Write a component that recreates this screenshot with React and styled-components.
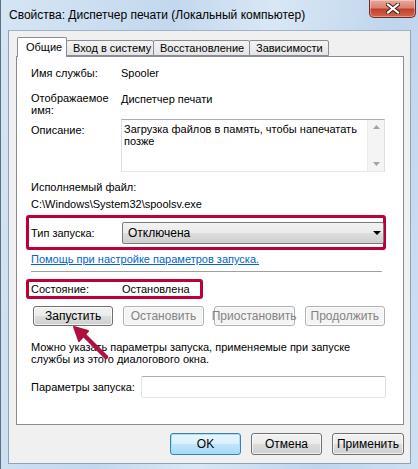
import React from 'react';
import styled, { createGlobalStyle } from 'styled-components';

const GlobalStyle = createGlobalStyle`
  html, body {
    margin: 0;
    padding: 0;
    background: #c9dcef;
  }
  body {
    font-family: "Liberation Sans", Arial, sans-serif;
    font-size: 11px;
    color: #000;
  }
`;

const Window = styled.div`
  position: relative;
  width: 418px;
  height: 469px;
  display: flex;
  flex-direction: column;
  box-sizing: border-box;
  border-left: 1px solid #5b6f85;
  background: linear-gradient(100deg, #d6e5f4 0%, #c3d8ee 35%, #d9e7f5 55%, #bfd5ec 80%, #cfe0f2 100%);
  overflow: hidden;
`;

const TitleBar = styled.div`
  height: 30px;
  flex: none;
  display: flex;
  justify-content: space-between;
  align-items: flex-start;
  padding-left: 8px;
`;

const Title = styled.div`
  padding-top: 8px;
  font-size: 12px;
  line-height: 14px;
  color: #000;
`;

const CloseButton = styled.div`
  width: 47px;
  height: 18px;
  margin-right: 2px;
  box-sizing: border-box;
  border: 1px solid #6d2a21;
  border-top: none;
  border-radius: 0 0 5px 5px;
  background: linear-gradient(#e9a99b 0%, #d9826f 45%, #c3402b 55%, #d2654f 100%);
  box-shadow: inset 0 0 0 1px rgba(255, 255, 255, 0.35);
  display: flex;
  align-items: center;
  justify-content: center;
`;

const Client = styled.div`
  flex: 1;
  margin: 0 7px 5px 7px;
  padding: 5px 6px 8px 7px;
  background: #f0f0f0;
  border: 1px solid #8ea3b8;
  border-top-color: #9fb2c6;
  display: flex;
  flex-direction: column;
  box-sizing: border-box;
`;

const TabRow = styled.div`
  display: flex;
  align-items: flex-end;
  padding-left: 1px;
  height: 20px;
  position: relative;
  z-index: 1;
`;

const Tab = styled.div`
  width: ${p => p.w}px;
  height: ${p => (p.active ? 20 : 16)}px;
  box-sizing: border-box;
  border: 1px solid #898c95;
  border-bottom: ${p => (p.active ? 'none' : '1px solid #898c95')};
  margin-left: ${p => (p.first ? 0 : -1)}px;
  background: ${p => (p.active ? '#fff' : 'linear-gradient(#f3f3f3, #e5e5e5)')};
  padding-left: ${p => (p.active ? 8 : 6)}px;
  line-height: ${p => (p.active ? 18 : 15)}px;
  white-space: nowrap;
  border-radius: 2px 2px 0 0;
  margin-bottom: ${p => (p.active ? -1 : 0)}px;
`;

const Panel = styled.div`
  flex: 1;
  background: #fff;
  border: 1px solid #898c95;
  padding: 0 18px 0 14px;
  display: flex;
  flex-direction: column;
`;

const FieldRow = styled.div`
  display: grid;
  grid-template-columns: 90px 1fr;
  align-items: start;
  margin-top: ${p => p.mt || 0}px;
  line-height: 12px;
`;

const Label = styled.div`
  padding-top: ${p => p.pt || 0}px;
`;

const Value = styled.div`
  padding-top: ${p => p.pt || 0}px;
`;

const Line = styled.div`
  line-height: 12px;
  margin-top: ${p => p.mt || 0}px;
  white-space: nowrap;
`;

const DescBox = styled.div`
  height: 53px;
  box-sizing: border-box;
  border: 1px solid #abadb3;
  border-left-color: #dcdfe6;
  border-right-color: #dcdfe6;
  border-bottom-color: #e3e9ef;
  display: flex;
`;

const DescText = styled.div`
  flex: 1;
  padding: 3px 2px 0 2px;
  line-height: 12px;
`;

const ScrollTrack = styled.div`
  width: 16px;
  background: #f4f4f4;
  border-left: 1px solid #ececec;
  display: flex;
  flex-direction: column;
  justify-content: space-between;
  align-items: center;
  padding: 5px 0 5px;
`;

const Highlight = styled.div`
  border: 3px solid #bd0037;
  border-radius: 3px;
  margin: ${p => p.mt || 0}px ${p => p.mr ?? -1}px 0 -5px;
  width: ${p => (p.w ? `${p.w}px` : 'auto')};
  box-sizing: border-box;
  padding: ${p => p.pad};
  display: grid;
  grid-template-columns: 91px 1fr;
  align-items: center;
  line-height: 12px;
`;

const Combo = styled.div`
  height: 22px;
  box-sizing: border-box;
  border: 1px solid #7a7a7a;
  border-radius: 2px;
  background: linear-gradient(#f2f2f2 0%, #ebebeb 50%, #dddddd 51%, #cfcfcf 100%);
  display: flex;
  align-items: center;
  justify-content: space-between;
  padding: 0 2px 0 5px;
  margin-right: -3px;
  font-size: 12px;
`;

const Link = styled.div`
  color: #0066cc;
  text-decoration: underline;
  line-height: 12px;
  margin-top: 3px;
`;

const Separator = styled.div`
  height: 1px;
  background: #a0a0a0;
  margin: 6px 3px 0 0;
`;

const ButtonRow = styled.div`
  display: flex;
  gap: ${p => p.gap}px;
  justify-content: ${p => p.justify || 'flex-start'};
  margin-top: ${p => p.mt || 0}px;
  padding-left: ${p => p.pl || 0}px;
`;

const Button = styled.div`
  width: ${p => p.w}px;
  height: ${p => p.h}px;
  box-sizing: border-box;
  border: 1px solid ${p => (p.disabled ? '#adb2b5' : p.primary ? '#3c7fb1' : '#707070')};
  border-radius: 3px;
  background: ${p =>
    p.disabled
      ? '#f4f4f4'
      : p.primary
      ? 'linear-gradient(#eaf6fd 0%, #d9f0fc 50%, #bee6fd 51%, #a7d9f5 100%)'
      : 'linear-gradient(#f2f2f2 0%, #ebebeb 50%, #dddddd 51%, #cfcfcf 100%)'};
  box-shadow: ${p => (p.primary ? 'inset 0 0 0 1px #a7e0f7' : 'inset 0 0 0 1px rgba(255,255,255,0.7)')};
  color: ${p => (p.disabled ? '#838383' : '#000')};
  display: flex;
  align-items: center;
  justify-content: center;
  font-size: 12px;
  white-space: nowrap;
`;

const Paragraph = styled.div`
  margin-top: 15px;
  line-height: 12px;
`;

const InputRow = styled.div`
  display: flex;
  align-items: center;
  justify-content: space-between;
  margin-top: 11px;
  margin-right: -1px;
`;

const TextInput = styled.div`
  width: 245px;
  height: 22px;
  box-sizing: border-box;
  border: 1px solid #abadb3;
  border-left-color: #e2e3ea;
  border-right-color: #dbdfe6;
  border-bottom-color: #e3e9ef;
  border-radius: 2px;
  background: #fff;
`;

const ArrowMark = styled.svg`
  position: absolute;
  left: 66px;
  top: 322px;
  pointer-events: none;
`;

const tabs = [
  { label: 'Общие', w: 50, active: true },
  { label: 'Вход в систему', w: 88 },
  { label: 'Восстановление', w: 97 },
  { label: 'Зависимости', w: 80 },
];

export default function App() {
  return (
    <>
      <GlobalStyle />
      <Window>
        <TitleBar>
          <Title>Свойства: Диспетчер печати (Локальный компьютер)</Title>
          <CloseButton>
            <svg width="14" height="11" viewBox="0 0 14 11">
              <path d="M2 1.5 L12 9.5 M12 1.5 L2 9.5" stroke="#3a1a16" strokeWidth="4" strokeLinecap="square" />
              <path d="M2 1.5 L12 9.5 M12 1.5 L2 9.5" stroke="#fff" strokeWidth="2.2" strokeLinecap="square" />
            </svg>
          </CloseButton>
        </TitleBar>
        <Client>
          <TabRow>
            {tabs.map((t, i) => (
              <Tab key={t.label} w={t.w} active={t.active} first={i === 0}>
                {t.label}
              </Tab>
            ))}
          </TabRow>
          <Panel>
            <FieldRow mt={10}>
              <Label>Имя службы:</Label>
              <Value>Spooler</Value>
            </FieldRow>
            <FieldRow mt={13}>
              <Label>
                Отображаемое
                <br />
                имя:
              </Label>
              <Value pt={1}>Диспетчер печати</Value>
            </FieldRow>
            <FieldRow mt={3}>
              <Label pt={5}>Описание:</Label>
              <DescBox>
                <DescText>Загрузка файлов в память, чтобы напечатать позже</DescText>
                <ScrollTrack>
                  <svg width="7" height="4" viewBox="0 0 7 4">
                    <path d="M0 4 L3.5 0 L7 4 Z" fill="#a3a3a3" />
                  </svg>
                  <svg width="7" height="4" viewBox="0 0 7 4">
                    <path d="M0 0 L3.5 4 L7 0 Z" fill="#a3a3a3" />
                  </svg>
                </ScrollTrack>
              </DescBox>
            </FieldRow>
            <Line mt={9}>Исполняемый файл:</Line>
            <Line mt={5}>C:\Windows\System32\spoolsv.exe</Line>
            <Highlight mt={5} pad="4px 2px 3px 2px">
              <span>Тип запуска:</span>
              <Combo>
                <span>Отключена</span>
                <svg width="8" height="4" viewBox="0 0 8 4">
                  <path d="M0 0 L8 0 L4 4 Z" fill="#000" />
                </svg>
              </Combo>
            </Highlight>
            <Link>Помощь при настройке параметров запуска.</Link>
            <Separator />
            <Highlight mt={7} w={177} mr={0} pad="1px 2px 1px 2px">
              <span>Состояние:</span>
              <span>Остановлена</span>
            </Highlight>
            <ButtonRow mt={7} gap={10} pl={2}>
              <Button w={81} h={20}>Запустить</Button>
              <Button w={81} h={20} disabled>Остановить</Button>
              <Button w={81} h={20} disabled>Приостановить</Button>
              <Button w={81} h={20} disabled>Продолжить</Button>
            </ButtonRow>
            <Paragraph>
              Можно указать параметры запуска, применяемые при запуске
              <br />
              службы из этого диалогового окна.
            </Paragraph>
            <InputRow>
              <span>Параметры запуска:</span>
              <TextInput />
            </InputRow>
          </Panel>
          <ButtonRow mt={8} gap={10} justify="flex-end">
            <Button w={71} h={22} primary>OK</Button>
            <Button w={71} h={22}>Отмена</Button>
            <Button w={72} h={22}>Применить</Button>
          </ButtonRow>
        </Client>
        <ArrowMark width="44" height="40" viewBox="0 0 44 40">
          <path d="M17 13 L39 35" stroke="#b0103f" strokeWidth="4.5" strokeLinecap="round" />
          <path d="M7 5 L21 9 L12 19 Z" fill="#b0103f" stroke="#b0103f" strokeWidth="2" strokeLinejoin="round" />
        </ArrowMark>
      </Window>
    </>
  );
}
